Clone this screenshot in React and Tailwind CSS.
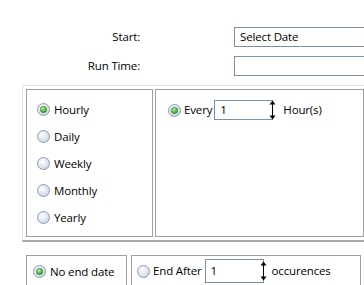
import React from 'react'

function Radio({ checked }) {
  return (
    <svg width="13" height="13" viewBox="0 0 13 13" className="shrink-0">
      <defs>
        <radialGradient id={checked ? 'rc' : 'ru'} cx="40%" cy="35%" r="70%">
          <stop offset="0%" stopColor="#ffffff" />
          <stop offset="100%" stopColor="#c9d4e4" />
        </radialGradient>
        <radialGradient id="dot" cx="40%" cy="35%" r="60%">
          <stop offset="0%" stopColor="#b8f0a8" />
          <stop offset="100%" stopColor="#2f9a2a" />
        </radialGradient>
      </defs>
      <circle cx="6.5" cy="6.5" r="6" fill={checked ? 'url(#rc)' : 'url(#ru)'} stroke="#8a9bb3" />
      {checked && <circle cx="6.5" cy="6.5" r="3.2" fill="url(#dot)" stroke="#3b8a34" strokeWidth="0.6" />}
    </svg>
  )
}

function Spin({ value, h }) {
  return (
    <div className={`relative w-[59px] ${h} border border-[#7a90ad] bg-white flex items-center pl-[5px]`}>
      <span>{value}</span>
      <svg width="7" height="21" viewBox="0 0 7 21" className="absolute right-[-4px] top-1/2 -translate-y-1/2">
        <line x1="3.5" y1="3" x2="3.5" y2="18" stroke="#000" strokeWidth="1" />
        <path d="M0.5 5 L3.5 1 L6.5 5 Z" fill="#000" />
        <path d="M0.5 16 L3.5 20 L6.5 16 Z" fill="#000" />
      </svg>
    </div>
  )
}

export default function App() {
  const freq = ['Hourly', 'Daily', 'Weekly', 'Monthly', 'Yearly']
  return (
    <div className="w-[364px] h-[285px] overflow-hidden bg-white text-black text-[11.5px] font-['Open_Sans','Noto_Sans',sans-serif] tracking-[-0.15px]">
      <div className="pt-[27px] flex flex-col gap-[9px]">
        <div className="flex items-center h-[20px]">
          <div className="w-[140px] text-right">Start:</div>
          <div className="ml-[94px] flex-1 h-[20px] border border-[#7a90ad] border-r-0 flex items-center pl-[5px]">Select Date</div>
        </div>
        <div className="flex items-center h-[20px]">
          <div className="w-[140px] text-right">Run Time:</div>
          <div className="ml-[94px] flex-1 h-[20px] border border-[#7a90ad] border-r-0"></div>
        </div>
      </div>

      <div className="mt-[9px] ml-[22px] border-t border-l border-[#e2e2e2] border-b-2 border-b-[#a9a9a9] pt-[3px] pl-[3px] pb-[3px] flex gap-[2px]">
        <div className="w-[127px] h-[148px] border border-[#a0a0a0] pt-[6px] pl-[10px] flex flex-col">
          {freq.map((f, i) => (
            <div key={f} className="h-[27px] flex items-center gap-[4px]">
              <Radio checked={i === 0} />
              <span>{f}</span>
            </div>
          ))}
        </div>
        <div className="w-[209px] h-[148px] border border-[#a0a0a0] pt-[10px] pl-[12px]">
          <div className="flex items-center h-[20px]">
            <Radio checked />
            <span className="ml-[3px]">Every</span>
            <div className="ml-[2px]">
              <Spin value="1" h="h-[20px]" />
            </div>
            <span className="ml-[10px]">Hour(s)</span>
          </div>
        </div>
      </div>

      <div className="mt-[13px] ml-[26px] flex gap-[4px]">
        <div className="w-[101px] h-[40px] border border-[#a0a0a0] border-b-0 pl-[6px] pt-[8px]">
          <div className="flex items-center h-[15px] gap-[4px]">
            <Radio checked />
            <span>No end date</span>
          </div>
        </div>
        <div className="w-[230px] h-[40px] border border-[#a0a0a0] border-b-0 pl-[5px] pt-[3px]">
          <div className="flex items-center h-[24px]">
            <Radio />
            <span className="ml-[3px]">End After</span>
            <div className="ml-[3px]">
              <Spin value="1" h="h-[24px]" />
            </div>
            <span className="ml-[8px]">occurences</span>
          </div>
        </div>
      </div>
    </div>
  )
}
